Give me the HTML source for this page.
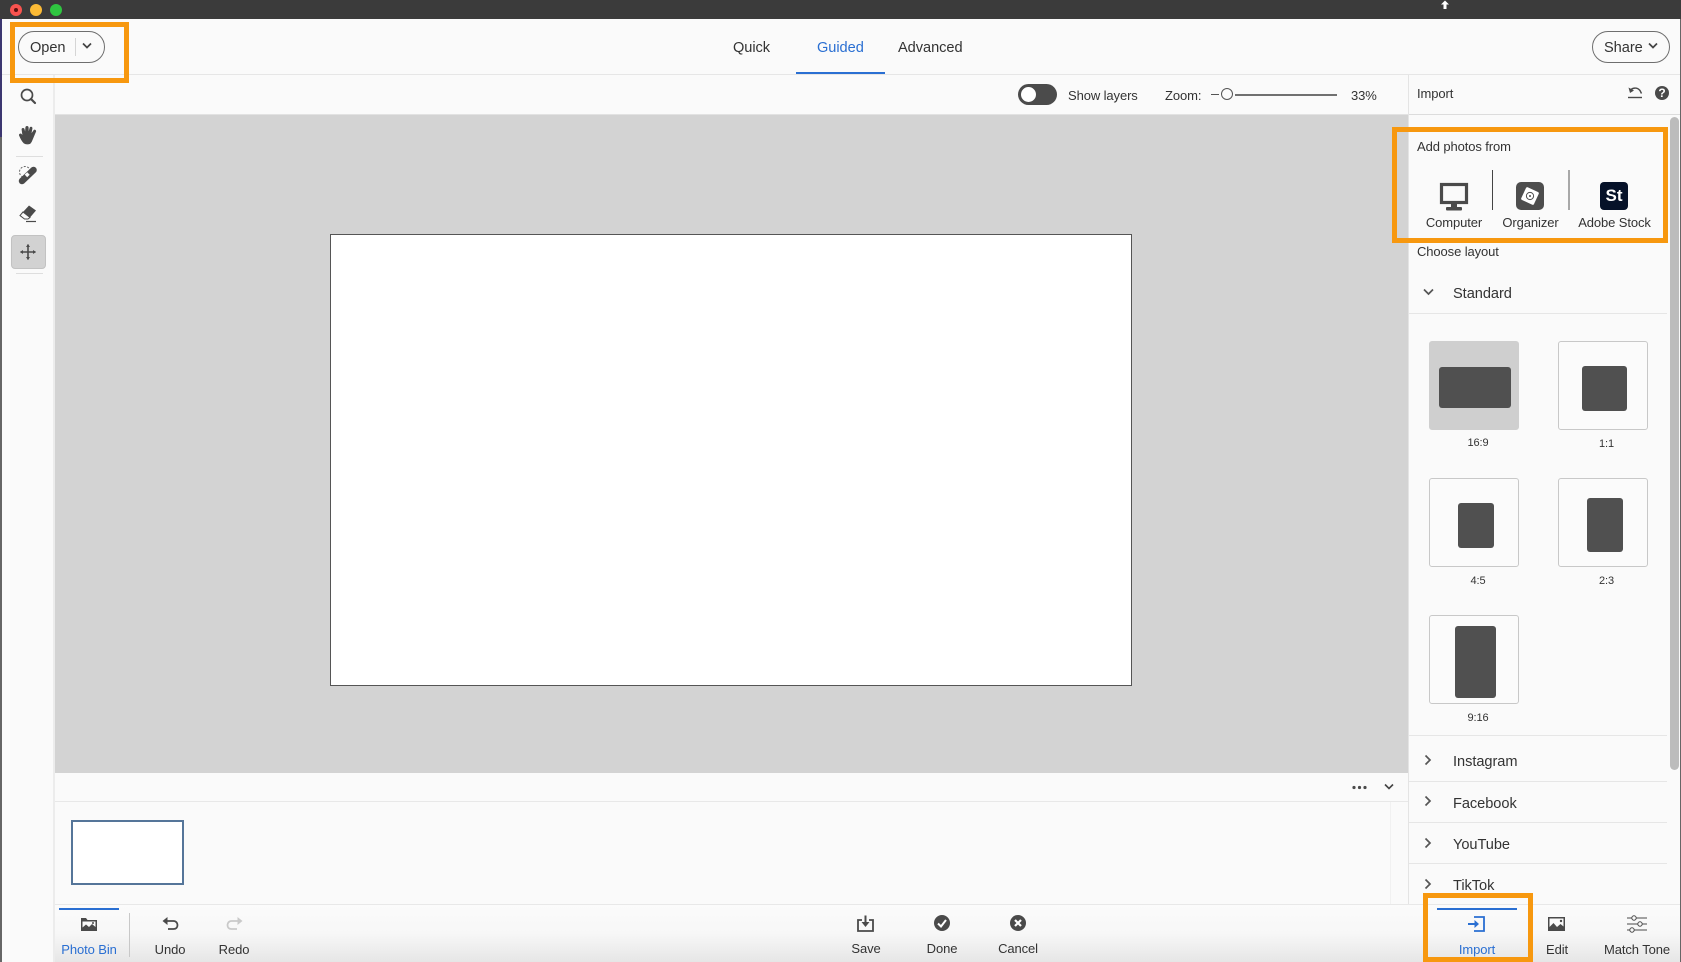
<!DOCTYPE html>
<html lang="en">
<head>
<meta charset="utf-8">
<title>Guided</title>
<style>
html,body{margin:0;padding:0;background:#fafafa;}
body{position:relative;width:1681px;height:962px;overflow:hidden;font-family:"Liberation Sans",sans-serif;color:#333;}
.a{position:absolute;}
.t{position:absolute;white-space:nowrap;line-height:20px;height:20px;font-size:13px;letter-spacing:-0.1px;margin-top:1px;}
.c{transform:translateX(-50%);}
.f15{font-size:14.6px;letter-spacing:-0.05px;}
.f12{font-size:11px;}
.blue{color:#2a6fd2;}
.line{position:absolute;background:#e6e6e6;}
.org{position:absolute;border:5px solid #f7980f;box-sizing:border-box;}
.thumb{position:absolute;width:90px;height:89px;box-sizing:border-box;border:1px solid #c8c8c8;border-radius:3px;background:#fbfbfb;}
.in{position:absolute;background:#505050;border-radius:3px;}
svg{position:absolute;overflow:visible;}
</style>
</head>
<body>
<!-- title bar -->
<div class="a" style="left:0;top:0;width:1681px;height:19px;background:#3b3b3b;"></div>
<div class="a" style="left:10px;top:4px;width:12px;height:12px;border-radius:50%;background:#f9534f;"></div>
<div class="a" style="left:14px;top:8px;width:4px;height:4px;border-radius:50%;background:#5a1210;"></div>
<div class="a" style="left:30px;top:4px;width:12px;height:12px;border-radius:50%;background:#fcbb36;"></div>
<div class="a" style="left:50px;top:4px;width:12px;height:12px;border-radius:50%;background:#2fc640;"></div>
<svg style="left:1440px;top:0" width="10" height="10"><path d="M5 0.5L9 4.5H6.5V9H3.5V4.5H1Z" fill="#fff"/></svg>

<!-- window edges -->
<div class="a" style="left:0;top:19px;width:2px;height:943px;background:#666;"></div>
<div class="a" style="left:0;top:19px;width:2px;height:118px;background:#3c3670;"></div>
<div class="a" style="right:0;top:19px;width:1px;height:943px;background:#666;"></div>

<!-- header -->
<div class="line" style="left:2px;top:74px;width:1678px;height:1px;"></div>
<div class="a" style="left:18px;top:31px;width:87px;height:32px;box-sizing:border-box;border:1px solid #6e6e6e;border-radius:16px;"></div>
<div class="t f15" style="left:30px;top:37px;">Open</div>
<div class="a" style="left:75px;top:38px;width:1px;height:18px;background:#d5d5d5;"></div>
<svg style="left:82px;top:42px" width="10" height="8"><path d="M1 1.5L5 5.5L9 1.5" fill="none" stroke="#444" stroke-width="1.7"/></svg>

<div class="t f15" style="left:733px;top:37px;">Quick</div>
<div class="t f15 blue" style="left:817px;top:37px;">Guided</div>
<div class="t f15" style="left:898px;top:37px;">Advanced</div>
<div class="a" style="left:796px;top:72px;width:89px;height:2px;background:#2a6fd2;"></div>

<div class="a" style="left:1592px;top:31px;width:78px;height:32px;box-sizing:border-box;border:1px solid #6e6e6e;border-radius:16px;"></div>
<div class="t f15" style="left:1604px;top:37px;">Share</div>
<svg style="left:1648px;top:42px" width="10" height="8"><path d="M1 1.5L5 5.5L9 1.5" fill="none" stroke="#444" stroke-width="1.7"/></svg>

<!-- left tools -->
<div class="a" style="left:53px;top:75px;width:2px;height:887px;background:#ececec;"></div>
<svg style="left:20px;top:88px" width="16" height="16"><circle cx="7" cy="7" r="5.5" fill="none" stroke="#4a4a4a" stroke-width="1.7"/><path d="M11 11L15 15" stroke="#4a4a4a" stroke-width="2.2" stroke-linecap="round"/></svg>
<svg style="left:19px;top:126px" width="19" height="18"><path d="M5 17C2.5 14.5 1.5 12 0.5 9.5C0 8 1.5 7.5 2.5 8.5L4 10.5L3 3.5C3 2 5 2 5.2 3.5L6.3 8L6.8 1.5C7 0 9 0 9.2 1.5L9.4 8L11 2C11.4 0.7 13.2 1 13 2.5L11.8 8.8L14.8 4.6C15.7 3.5 17.2 4.5 16.5 5.8L13.5 13C12.8 15 12 16.5 11 17.5C9 18.2 6.5 18 5 17Z" fill="#4a4a4a" stroke="#4a4a4a" stroke-width="0.8"/></svg>
<div class="line" style="left:16px;top:156px;width:27px;height:1px;background:#dedede;"></div>
<svg style="left:18px;top:165px" width="20" height="20"><circle cx="7" cy="7" r="5.5" fill="none" stroke="#666" stroke-width="1" stroke-dasharray="2 1.5"/><path d="M4 16L15.5 5" stroke="#4a4a4a" stroke-width="6.5" stroke-linecap="round"/><rect x="7.5" y="8" width="3.5" height="3.5" fill="#fafafa" transform="rotate(-44 9.2 9.8)"/></svg>
<svg style="left:19px;top:205px" width="18" height="18"><path d="M10 0.5L17 5.5L11 12.5L4 7Z" fill="#4a4a4a"/><path d="M4 7L1 10.5L5.5 14H9L11 12.5Z" fill="#fafafa" stroke="#4a4a4a" stroke-width="1"/><path d="M7 16.5H17" stroke="#4a4a4a" stroke-width="1.2"/></svg>
<div class="a" style="left:11px;top:235px;width:35px;height:34px;box-sizing:border-box;border:1px solid #c2c2c2;border-radius:4px;background:#d2d2d2;"></div>
<svg style="left:20px;top:244px" width="16" height="16"><path d="M8 0.5V15.5M0.5 8H15.5" stroke="#4a4a4a" stroke-width="1.6"/><path d="M8 0L10 3H6ZM8 16L10 13H6ZM0 8L3 6V10ZM16 8L13 6V10Z" fill="#4a4a4a"/></svg>
<div class="line" style="left:16px;top:273px;width:27px;height:1px;background:#dedede;"></div>

<!-- options bar -->
<div class="a" style="left:1018px;top:84px;width:39px;height:21px;border-radius:11px;background:#4b4b4b;"></div>
<div class="a" style="left:1021px;top:87px;width:15px;height:15px;border-radius:50%;background:#fff;"></div>
<div class="t" style="left:1068px;top:85px;">Show layers</div>
<div class="t" style="left:1165px;top:85px;">Zoom:</div>
<div class="a" style="left:1211px;top:94px;width:8px;height:1px;background:#555;"></div>
<div class="a" style="left:1235px;top:94px;width:102px;height:2px;background:#707070;"></div>
<div class="a" style="left:1221px;top:88px;width:12px;height:12px;box-sizing:border-box;border:1px solid #555;border-radius:50%;background:#fafafa;"></div>
<div class="t" style="left:1351px;top:85px;">33%</div>

<!-- canvas -->
<div class="a" style="left:55px;top:115px;width:1354px;height:658px;background:#d3d3d3;"></div>
<div class="a" style="left:55px;top:114px;width:1354px;height:1px;background:#e2e2e2;"></div>
<div class="a" style="left:330px;top:234px;width:802px;height:452px;box-sizing:border-box;background:#fff;border:1px solid #555;"></div>

<!-- bin strip -->
<div class="line" style="left:55px;top:801px;width:1353px;height:1px;background:#e8e8e8;"></div>
<div class="a" style="left:1390px;top:802px;width:1px;height:102px;background:#f1f1f1;"></div>
<div class="a" style="left:71px;top:820px;width:113px;height:65px;box-sizing:border-box;background:#fff;border:2px solid #557599;"></div>
<svg style="left:1352px;top:785px" width="16" height="5"><circle cx="2" cy="2.5" r="1.6" fill="#4a4a4a"/><circle cx="7.5" cy="2.5" r="1.6" fill="#4a4a4a"/><circle cx="13" cy="2.5" r="1.6" fill="#4a4a4a"/></svg>
<svg style="left:1384px;top:783px" width="10" height="8"><path d="M1 1.5L5 5.5L9 1.5" fill="none" stroke="#444" stroke-width="1.6"/></svg>

<!-- right panel -->
<div class="a" style="left:1408px;top:75px;width:1px;height:829px;background:#e4e4e4;"></div>
<div class="line" style="left:1409px;top:114px;width:271px;height:1px;background:#dcdcdc;"></div>
<div class="t" style="left:1417px;top:83px;">Import</div>
<svg style="left:1627px;top:85px" width="16" height="15"><path d="M3 6C5 2.5 10 2 13 5.5L14.5 8.5" fill="none" stroke="#4a4a4a" stroke-width="1.4"/><path d="M1.5 2.5L3 8L7 5.5Z" fill="#4a4a4a"/><path d="M1 12.5H15" stroke="#4a4a4a" stroke-width="1.4"/></svg>
<div class="a" style="left:1655px;top:86px;width:14px;height:14px;border-radius:50%;background:#4a4a4a;color:#fff;font-size:12px;font-weight:bold;line-height:14px;text-align:center;">?</div>
<div class="a" style="left:1670px;top:117px;width:9px;height:653px;border-radius:5px;background:#bcbcbc;"></div>

<div class="t" style="left:1417px;top:136px;">Add photos from</div>
<svg style="left:1440px;top:183px" width="28" height="28"><rect x="1.5" y="1.5" width="25" height="18" fill="none" stroke="#4a4a4a" stroke-width="3.2"/><rect x="11" y="20" width="6" height="4" fill="#4a4a4a"/><rect x="6" y="24" width="16" height="3.5" rx="1" fill="#4a4a4a"/></svg>
<div class="t c" style="left:1454px;top:212px;">Computer</div>
<div class="a" style="left:1492px;top:170px;width:1px;height:40px;background:#444;"></div>
<div class="a" style="left:1516px;top:182px;width:28px;height:28px;border-radius:5px;background:#4d4d4d;"></div>
<svg style="left:1516px;top:182px" width="28" height="28"><rect x="7" y="7" width="14" height="14" rx="1.5" fill="#fff" transform="rotate(25 14 14)"/><circle cx="14" cy="14" r="3.6" fill="none" stroke="#4d4d4d" stroke-width="1"/><circle cx="14" cy="14" r="1" fill="#4d4d4d"/></svg>
<div class="t c" style="left:1530.5px;top:212px;">Organizer</div>
<div class="a" style="left:1568px;top:170px;width:2px;height:40px;background:#a8a8a8;"></div>
<div class="a" style="left:1600px;top:182px;width:28px;height:28px;border-radius:4px;background:#061229;color:#fff;font-weight:bold;font-size:17px;line-height:28px;text-align:center;">St</div>
<div class="t c" style="left:1614.5px;top:212px;">Adobe Stock</div>
<div class="t" style="left:1417px;top:241px;">Choose layout</div>

<svg style="left:1423px;top:288px" width="11" height="8"><path d="M1 1.5L5.5 6L10 1.5" fill="none" stroke="#555" stroke-width="1.7"/></svg>
<div class="t f15" style="left:1453px;top:283px;">Standard</div>
<div class="line" style="left:1409px;top:313px;width:258px;height:1px;"></div>

<div class="thumb" style="left:1429px;top:341px;background:#cfcfcf;border-color:#cfcfcf;"></div>
<div class="in" style="left:1439px;top:367px;width:72px;height:41px;"></div>
<div class="t c f12" style="left:1478px;top:432px;">16:9</div>
<div class="thumb" style="left:1558px;top:341px;"></div>
<div class="in" style="left:1582px;top:366px;width:45px;height:45px;"></div>
<div class="t c f12" style="left:1606.5px;top:433px;">1:1</div>
<div class="thumb" style="left:1429px;top:478px;"></div>
<div class="in" style="left:1458px;top:503px;width:36px;height:45px;"></div>
<div class="t c f12" style="left:1478px;top:570px;">4:5</div>
<div class="thumb" style="left:1558px;top:478px;"></div>
<div class="in" style="left:1587px;top:498px;width:36px;height:54px;"></div>
<div class="t c f12" style="left:1606.5px;top:570px;">2:3</div>
<div class="thumb" style="left:1429px;top:615px;"></div>
<div class="in" style="left:1455px;top:626px;width:41px;height:72px;"></div>
<div class="t c f12" style="left:1478px;top:707px;">9:16</div>
<div class="line" style="left:1409px;top:735px;width:258px;height:1px;"></div>

<svg style="left:1424px;top:754px" width="8" height="12"><path d="M1.5 1.5L6 6L1.5 10.5" fill="none" stroke="#555" stroke-width="1.7"/></svg>
<div class="t f15" style="left:1453px;top:751px;">Instagram</div>
<div class="line" style="left:1409px;top:781px;width:258px;height:1px;"></div>
<svg style="left:1424px;top:795px" width="8" height="12"><path d="M1.5 1.5L6 6L1.5 10.5" fill="none" stroke="#555" stroke-width="1.7"/></svg>
<div class="t f15" style="left:1453px;top:793px;">Facebook</div>
<div class="line" style="left:1409px;top:822px;width:258px;height:1px;"></div>
<svg style="left:1424px;top:837px" width="8" height="12"><path d="M1.5 1.5L6 6L1.5 10.5" fill="none" stroke="#555" stroke-width="1.7"/></svg>
<div class="t f15" style="left:1453px;top:834px;">YouTube</div>
<div class="line" style="left:1409px;top:863px;width:258px;height:1px;"></div>
<svg style="left:1424px;top:878px" width="8" height="12"><path d="M1.5 1.5L6 6L1.5 10.5" fill="none" stroke="#555" stroke-width="1.7"/></svg>
<div class="t f15" style="left:1453px;top:875px;">TikTok</div>

<!-- bottom bar -->
<div class="a" style="left:55px;top:904px;width:1625px;height:58px;background:linear-gradient(#fbfbfb 0%,#f7f7f7 50%,#e6e6e6 100%);border-top:1px solid #e8e8e8;box-sizing:border-box;"></div>
<div class="a" style="left:59px;top:908px;width:60px;height:2px;background:#2a6fd2;"></div>
<svg style="left:81px;top:917px" width="16" height="14"><path d="M0 1H5L6.5 3H16V14H0Z" fill="#4a4a4a"/><path d="M1.5 4.5H14.5V10L11 7L8 10L5 7.5L1.5 10.5Z" fill="#fafafa"/><circle cx="12" cy="6" r="1" fill="#4a4a4a"/></svg>
<div class="t c blue" style="left:89px;top:939px;">Photo Bin</div>
<div class="a" style="left:129px;top:913px;width:1px;height:44px;background:#c8c8c8;"></div>
<svg style="left:162px;top:916px" width="17" height="15"><path d="M3 5H11.5C14 5 15.5 7 15.5 9C15.5 11.5 14 13 11.5 13H6" fill="none" stroke="#4a4a4a" stroke-width="1.8"/><path d="M0.5 5L5.5 1V9Z" fill="#4a4a4a"/></svg>
<div class="t c" style="left:170px;top:939px;">Undo</div>
<svg style="left:226px;top:916px" width="17" height="15"><path d="M14 5H5.5C3 5 1.5 7 1.5 9C1.5 11.5 3 13 5.5 13H11" fill="none" stroke="#c9c9c9" stroke-width="1.8"/><path d="M16.5 5L11.5 1V9Z" fill="#c9c9c9"/></svg>
<div class="t c" style="left:234px;top:939px;">Redo</div>

<svg style="left:857px;top:915px" width="17" height="17"><path d="M5 5H1V16H16V5H12" fill="none" stroke="#4a4a4a" stroke-width="1.8"/><path d="M8.5 0.5V9" stroke="#4a4a4a" stroke-width="2"/><path d="M4.5 7L8.5 12L12.5 7Z" fill="#4a4a4a"/></svg>
<div class="t c" style="left:866px;top:938px;">Save</div>
<svg style="left:934px;top:915px" width="16" height="16"><circle cx="8" cy="8" r="8" fill="#4a4a4a"/><path d="M4 8.5L7 11.5L12 5" fill="none" stroke="#fff" stroke-width="2"/></svg>
<div class="t c" style="left:942px;top:938px;">Done</div>
<svg style="left:1010px;top:915px" width="16" height="16"><circle cx="8" cy="8" r="8" fill="#4a4a4a"/><path d="M5 5L11 11M11 5L5 11" stroke="#fff" stroke-width="2.2"/></svg>
<div class="t c" style="left:1018px;top:938px;">Cancel</div>

<div class="a" style="left:1437px;top:908px;width:80px;height:2px;background:#2a6fd2;"></div>
<svg style="left:1468px;top:916px" width="17" height="16"><path d="M6 1H16V15H6" fill="none" stroke="#2a6fd2" stroke-width="1.8"/><path d="M0 8H8" stroke="#2a6fd2" stroke-width="2"/><path d="M6.5 4L11 8L6.5 12Z" fill="#2a6fd2"/></svg>
<div class="t c blue" style="left:1477px;top:939px;">Import</div>
<svg style="left:1548px;top:917px" width="17" height="14"><rect width="17" height="14" fill="#4a4a4a"/><path d="M1.5 1.5H15.5V9.5L12.5 7L9 10L5.5 6L1.5 10Z" fill="#fafafa"/><circle cx="13" cy="4" r="1.2" fill="#4a4a4a"/></svg>
<div class="t c" style="left:1557px;top:939px;">Edit</div>
<svg style="left:1627px;top:915px" width="20" height="18"><path d="M0 3H5M9 3H20M0 9H11M15 9H20M0 15H3M7 15H20" stroke="#4a4a4a" stroke-width="1"/><circle cx="7" cy="3" r="2.2" fill="none" stroke="#4a4a4a"/><circle cx="13" cy="9" r="2.2" fill="none" stroke="#4a4a4a"/><circle cx="5" cy="15" r="2.2" fill="none" stroke="#4a4a4a"/></svg>
<div class="t c" style="left:1637px;top:939px;">Match Tone</div>

<!-- orange callouts -->
<div class="org" style="left:10px;top:22px;width:119px;height:61px;"></div>
<div class="org" style="left:1392px;top:127px;width:276px;height:116px;"></div>
<div class="org" style="left:1423px;top:893px;width:110px;height:69px;"></div>
</body>
</html>
